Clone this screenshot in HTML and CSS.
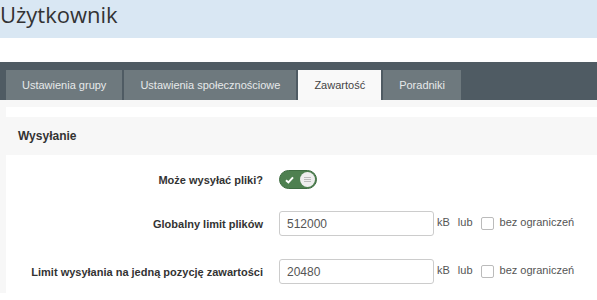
FILE: index.html
```html
<!DOCTYPE html>
<html>
<head>
	<meta name="viewport" content="width=device-width, initial-scale=1.0">
	<link rel="stylesheet" href="styles.css">
	<title>Użytkownik</title>
</head>
<body>
	<div class="header">
		<h1 class="title">Użytkownik</h1>
	</div>

	<div class="tabbar">
		<div class="tab">Ustawienia grupy</div>
		<div class="tab">Ustawienia społecznościowe</div>
		<div class="tab active">Zawartość</div>
		<div class="tab">Poradniki</div>
	</div>

	<div class="content">
		<div class="panel">
			<div class="section-head">Wysyłanie</div>

			<div class="form-item first">
				<label class="form-label">Może wysyłać pliki?</label>
				<div class="form-control">
					<span class="toggle">
						<svg class="check" width="9" height="8" viewBox="0 0 9 8">
							<path d="M1 4.2 L3.4 6.4 L8 1.4" fill="none" stroke="#fff" stroke-width="2"/>
						</svg>
						<span class="knob"><span class="lines"></span></span>
					</span>
				</div>
			</div>

			<div class="form-item">
				<label class="form-label" for="global_limit">Globalny limit plików</label>
				<div class="form-control">
					<input class="text-input" id="global_limit" type="text" value="512000">
					<span class="unit">kB</span>
					<span class="unit">lub</span>
					<span class="checkbox"></span>
					<span class="unit">bez ograniczeń</span>
				</div>
			</div>

			<div class="form-item">
				<label class="form-label" for="item_limit">Limit wysyłania na jedną pozycję zawartości</label>
				<div class="form-control">
					<input class="text-input" id="item_limit" type="text" value="20480">
					<span class="unit">kB</span>
					<span class="unit">lub</span>
					<span class="checkbox"></span>
					<span class="unit">bez ograniczeń</span>
				</div>
			</div>
		</div>
	</div>
</body>
</html>
```

FILE: styles.css
```css
	body {
		margin: 0;
		font-family: "Liberation Sans", Arial, sans-serif;
		background-color: #fff;
		overflow: hidden;
	}

	.header {
		background-color: #d9e7f3;
		height: 38px;
		margin-bottom: 24px;
	}

	.title {
		margin: 0;
		font-family: "Open Sans", sans-serif;
		font-weight: 400;
		font-size: 22px;
		line-height: 28px;
		color: #333;
	}

	.tabbar {
		background-color: #4f5b63;
		height: 30px;
		padding: 8px 0 0 6px;
		display: flex;
		gap: 2px;
	}

	.tab {
		background-color: #6e797e;
		color: #e6e9ea;
		font-size: 11px;
		line-height: 30px;
		padding: 0 16px;
	}

	.tab.active {
		background-color: #f9f9f9;
		color: #444;
	}

	.content {
		background-color: #f7f7f7;
		padding: 7px 0 0 6px;
		height: 193px;
		box-sizing: border-box;
	}

	.panel {
		background-color: #fff;
		padding-top: 10px;
		height: 100%;
		box-sizing: border-box;
	}

	.section-head {
		background-color: #f7f7f7;
		height: 38px;
		line-height: 38px;
		padding-left: 12px;
		font-size: 12px;
		font-weight: bold;
		color: #333;
	}

	.form-item {
		display: grid;
		grid-template-columns: 257px 1fr;
		column-gap: 16px;
		align-items: center;
		height: 25px;
		margin-bottom: 23px;
	}

	.form-item.first {
		margin-top: 12px;
		margin-bottom: 19px;
	}

	.form-label {
		text-align: right;
		font-size: 11px;
		font-weight: bold;
		color: #333;
	}

	.form-control {
		display: flex;
		align-items: center;
	}

	.text-input {
		box-sizing: border-box;
		width: 155px;
		height: 25px;
		border: 1px solid #ccc;
		border-radius: 3px;
		padding: 0 7px;
		font-family: "Liberation Sans", Arial, sans-serif;
		font-size: 12px;
		color: #555;
		margin: 0 3px 0 0;
	}

	.unit {
		font-size: 11px;
		color: #555;
		margin-right: 8px;
		position: relative;
		top: -2px;
	}

	.checkbox {
		box-sizing: border-box;
		width: 13px;
		height: 13px;
		border: 1px solid #bbb;
		border-radius: 2px;
		margin-right: 6px;
	}

	.toggle {
		box-sizing: border-box;
		width: 38px;
		height: 19px;
		border-radius: 10px;
		background-color: #4e8050;
		border: 1px solid #3f6d42;
		display: flex;
		align-items: center;
		justify-content: space-between;
		padding: 0 1px 0 5px;
	}

	.knob {
		width: 15px;
		height: 15px;
		border-radius: 50%;
		background-color: #eee;
		display: flex;
		align-items: center;
		justify-content: center;
	}

	.lines {
		width: 7px;
		height: 5px;
		border-top: 1px solid #bbb;
		border-bottom: 1px solid #bbb;
		background: linear-gradient(#bbb, #bbb) center / 100% 1px no-repeat;
		box-sizing: border-box;
	}
```
